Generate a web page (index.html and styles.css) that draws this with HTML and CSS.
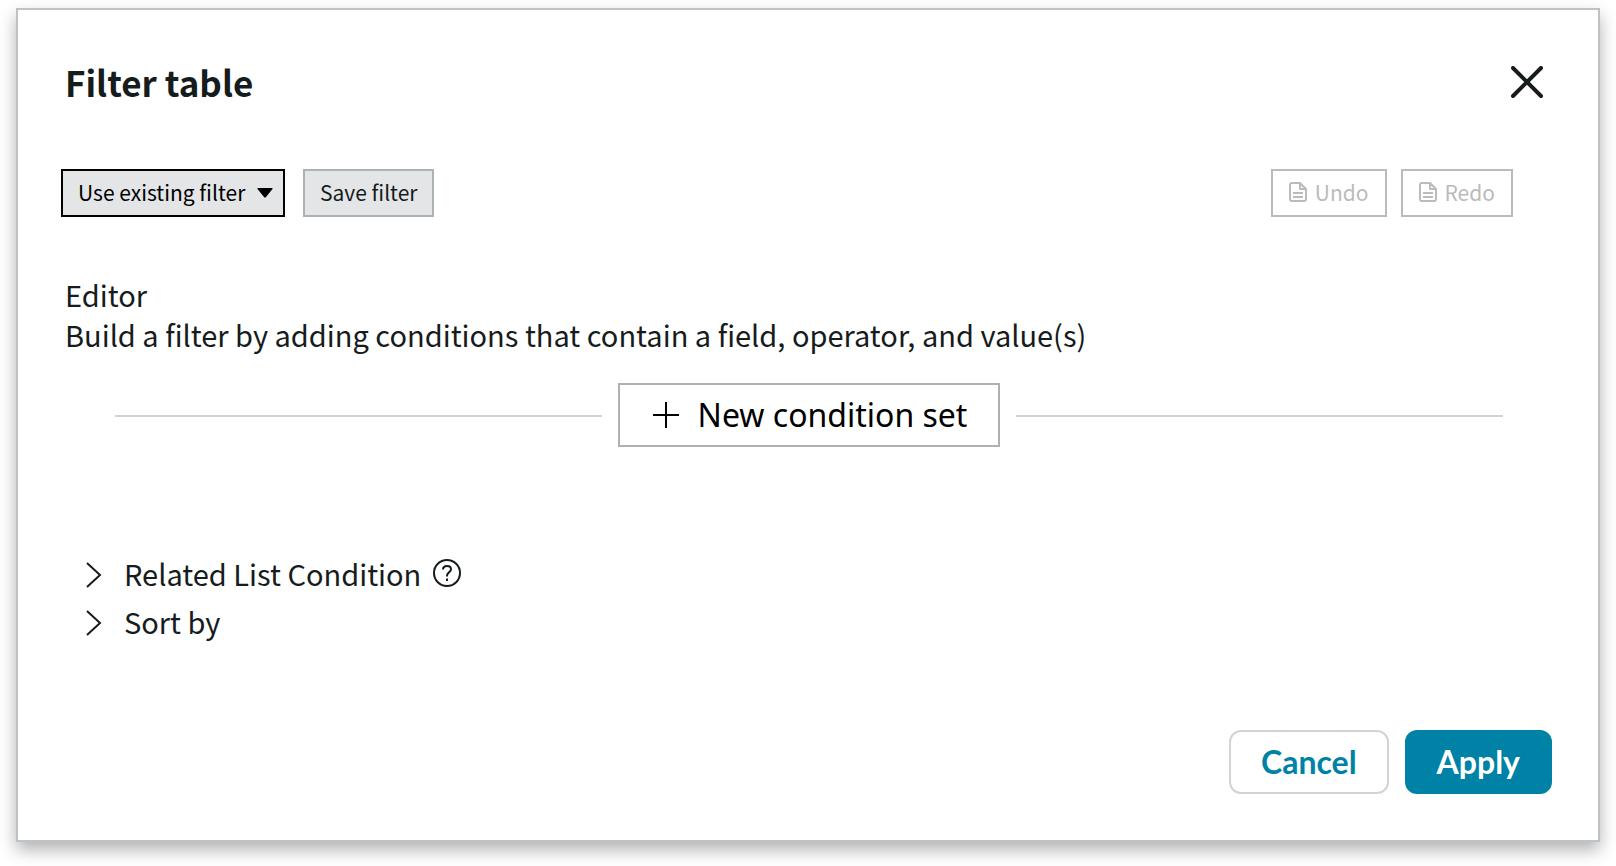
FILE: index.html
```html
<!DOCTYPE html>
<html lang="en">
<head>
    <meta charset="UTF-8">
    <meta name="viewport" content="width=device-width, initial-scale=1.0">
    <title>Filter table</title>
    <link rel="stylesheet" href="styles.css">
</head>
<body>
    <div class="dialog" role="dialog" aria-labelledby="dialog-title">
        <header class="dialog-header">
            <h2 id="dialog-title">Filter table</h2>
            <button type="button" class="icon-button" aria-label="Close">
                <svg width="32" height="32" viewBox="0 0 32 32" fill="none" stroke="currentColor" stroke-width="4" stroke-linecap="round"><path d="M2 2l28 28M30 2L2 30"/></svg>
            </button>
        </header>

        <div class="toolbar">
            <div class="existing-filter">
                <select class="tool" aria-label="Use existing filter">
                    <option>Use existing filter</option>
                </select>
                <svg class="caret" width="16" height="10" viewBox="0 0 16 10"><path d="M1 0h14q1 0 .5 1L9 9q-1 1-2 0L.5 1Q0 0 1 0z"/></svg>
            </div>
            <button type="button" class="tool save">Save filter</button>
            <div class="history">
                <button type="button" class="tool" disabled>
                    <svg width="18" height="20" viewBox="0 0 18 20" fill="none" stroke="currentColor" stroke-width="2" stroke-linejoin="round"><path d="M3 1h8l6 6v10a2 2 0 0 1-2 2H3a2 2 0 0 1-2-2V3a2 2 0 0 1 2-2zM11 1v6h6M4 11h10M4 15h10"/></svg>
                    Undo
                </button>
                <button type="button" class="tool" disabled>
                    <svg width="18" height="20" viewBox="0 0 18 20" fill="none" stroke="currentColor" stroke-width="2" stroke-linejoin="round"><path d="M3 1h8l6 6v10a2 2 0 0 1-2 2H3a2 2 0 0 1-2-2V3a2 2 0 0 1 2-2zM11 1v6h6M4 11h10M4 15h10"/></svg>
                    Redo
                </button>
            </div>
        </div>

        <div class="editor">
            <p>Editor</p>
            <p>Build a filter by adding conditions that contain a field, operator, and value(s)</p>
        </div>

        <div class="new-condition">
            <button type="button">
                <svg width="26" height="26" viewBox="0 0 26 26" fill="none" stroke="currentColor" stroke-width="2"><path d="M13 0v26M0 13h26"/></svg>
                New condition set
            </button>
        </div>

        <div class="sections">
            <div class="section">
                <button type="button" class="section-toggle" aria-expanded="false">
                    <svg width="16" height="26" viewBox="0 0 16 26" fill="none" stroke="currentColor" stroke-width="2"><path d="M1 1l13 12L1 25"/></svg>
                    Related List Condition
                </button>
                <button type="button" class="help" aria-label="Help">
                    <svg width="28" height="28" viewBox="0 0 28 28" fill="none" stroke="currentColor" stroke-width="2"><circle cx="14" cy="14" r="13"/><path d="M10 10.500c0-2.200 1.700-3.500 4-3.500s4 1.300 4 3.300c0 3-4 3.200-4 6.200v1M14 19.500v2.500"/></svg>
                </button>
            </div>
            <div class="section">
                <button type="button" class="section-toggle" aria-expanded="false">
                    <svg width="16" height="26" viewBox="0 0 16 26" fill="none" stroke="currentColor" stroke-width="2"><path d="M1 1l13 12L1 25"/></svg>
                    Sort by
                </button>
            </div>
        </div>

        <footer class="dialog-footer">
            <button type="button" class="cancel">Cancel</button>
            <button type="button" class="apply">Apply</button>
        </footer>
    </div>
</body>
</html>
```
FILE: styles.css
```css
* {
    box-sizing: border-box;
}
body {
    margin: 0;
    padding: 8px 16px 24px;
    background-color: #fff;
    color: #161b1c;
    font-family: "Noto Sans CJK SC", "Noto Sans", sans-serif;
    font-size: 29px;
    line-height: 40px;
}
h2, p {
    margin: 0;
}
button, select {
    margin: 0;
    padding: 0;
    border: none;
    background: none;
    color: inherit;
    font: inherit;
    cursor: pointer;
}
svg {
    display: block;
    flex: none;
}
.dialog {
    border: 2px solid #bdc3c7;
    background-color: #fff;
    box-shadow: 0 8px 16px rgba(0, 0, 0, 0.3);
}
.dialog-header {
    display: flex;
    justify-content: space-between;
    align-items: center;
    padding: 47px 46px 0 47px;
}
.dialog-header h2 {
    font-size: 35px;
    font-weight: bold;
    line-height: 50px;
}
.icon-button {
    display: flex;
    justify-content: center;
    align-items: center;
    width: 50px;
    height: 48px;
}
.toolbar {
    display: flex;
    margin-top: 62px;
    padding: 0 85px 0 43px;
}
.tool {
    display: flex;
    align-items: center;
    gap: 8px;
    height: 48px;
    padding: 0 16px 2px;
    border: 2px solid #bbb;
    font-size: 21px;
    line-height: 42px;
}
.tool:disabled {
    color: #bbb;
    cursor: default;
}
.existing-filter {
    position: relative;
    margin-right: 18px;
}
.existing-filter .tool {
    appearance: none;
    padding: 0 37px 2px 15px;
    border-color: #000;
    background-color: #e4e5e7;
    color: #000;
}
.caret {
    position: absolute;
    top: 19px;
    right: 12px;
    pointer-events: none;
}
.save {
    padding: 0 15px 2px;
    border-color: #abb3b4;
    background-color: #e4e5e7;
}
.history {
    display: flex;
    gap: 14px;
    margin-left: auto;
}
.editor {
    margin-top: 57px;
    padding: 0 47px;
}
.new-condition {
    display: flex;
    align-items: center;
    gap: 16px;
    margin-top: 29px;
    padding: 0 95px 0 97px;
}
.new-condition::before,
.new-condition::after {
    content: "";
    flex: 1;
    height: 2px;
    margin-top: 2px;
    background-color: #ced4d4;
}
.new-condition button {
    display: flex;
    align-items: center;
    gap: 19px;
    height: 64px;
    padding: 0 31px 0 33px;
    border: 2px solid #abb1b4;
    color: #000;
    font-family: "Noto Sans", sans-serif;
    font-size: 32px;
}
.sections {
    margin-top: 102px;
    padding: 0 68px;
}
.section {
    display: flex;
    align-items: center;
    gap: 12px;
    height: 48px;
}
.section-toggle {
    display: flex;
    align-items: center;
    gap: 22px;
}
.section-toggle svg {
    margin-top: 4px;
}
.dialog-footer {
    display: flex;
    justify-content: flex-end;
    gap: 16px;
    margin-top: 85px;
    padding: 0 46px 46px;
}
.dialog-footer button {
    height: 64px;
    padding: 0 30px;
    border: 2px solid #ced4d7;
    border-radius: 12px;
    color: #0082a6;
    font-family: Lato, sans-serif;
    font-size: 32px;
    font-weight: bold;
}
.dialog-footer .apply {
    border-color: #0082a6;
    background-color: #0082a6;
    color: #fff;
}
```
